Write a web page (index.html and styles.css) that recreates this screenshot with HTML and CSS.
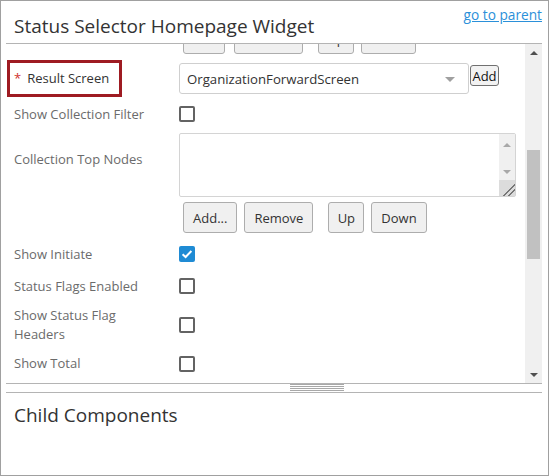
FILE: index.html
```html
<!DOCTYPE html>
<html>
<head>
<meta charset="utf-8">
<link rel="stylesheet" href="styles.css">
</head>
<body>
<div class="panel">
  <div class="header">
    <h1 class="title">Status Selector Homepage Widget</h1>
    <a class="parent-link" href="#">go to parent</a>
  </div>
  <div class="scroll-area">
    <div class="scroll-view">
      <div class="scroll-content">
        <div class="row row-btns row-btns-top">
          <div class="label"></div>
          <div class="control btn-group">
            <button class="btn btn-narrow">Add</button>
            <button class="btn">Remove</button>
            <button class="btn btn-up">Up</button>
            <button class="btn">Down</button>
          </div>
        </div>
        <div class="row row-result">
          <div class="label">
            <span class="highlight"><span class="req">*</span>Result Screen</span>
          </div>
          <div class="control select-wrap">
            <div class="select">
              <span class="select-text">OrganizationForwardScreen</span>
              <span class="select-arrow"></span>
            </div>
            <button class="btn-small">Add</button>
          </div>
        </div>
        <div class="row row-check row-filter">
          <div class="label">Show Collection Filter</div>
          <div class="control"><span class="checkbox"></span></div>
        </div>
        <div class="row row-nodes">
          <div class="label label-top">Collection Top Nodes</div>
          <div class="control">
            <div class="textarea">
              <div class="ta-bar">
                <span class="ta-arrow ta-up"></span>
                <span class="ta-arrow ta-down"></span>
                <span class="ta-grip"></span>
              </div>
            </div>
          </div>
        </div>
        <div class="row row-btns">
          <div class="label"></div>
          <div class="control btn-group">
            <button class="btn">Add...</button>
            <button class="btn">Remove</button>
            <button class="btn btn-up">Up</button>
            <button class="btn">Down</button>
          </div>
        </div>
        <div class="row row-check row-initiate">
          <div class="label">Show Initiate</div>
          <div class="control"><span class="checkbox checked"><svg viewBox="0 0 16 16" width="16" height="16"><path d="M3.6 8.2 L6.6 11 L12.4 5" fill="none" stroke="#fff" stroke-width="2"/></svg></span></div>
        </div>
        <div class="row row-check row-flags">
          <div class="label">Status Flags Enabled</div>
          <div class="control"><span class="checkbox"></span></div>
        </div>
        <div class="row row-check row-headers">
          <div class="label label-wrap">Show Status Flag Headers</div>
          <div class="control"><span class="checkbox"></span></div>
        </div>
        <div class="row row-check row-total">
          <div class="label">Show Total</div>
          <div class="control"><span class="checkbox"></span></div>
        </div>
      </div>
    </div>
    <div class="scrollbar">
      <div class="sb-btn"><span class="sb-arrow-up"></span></div>
      <div class="sb-track"><div class="sb-thumb"></div></div>
      <div class="sb-btn"><span class="sb-arrow-down"></span></div>
    </div>
  </div>
  <div class="splitter"><div class="grip"></div></div>
  <div class="child-section">
    <h2 class="child-title">Child Components</h2>
  </div>
</div>
</body>
</html>
```

FILE: styles.css
```css
* { box-sizing: border-box; }
html, body { margin: 0; padding: 0; background: #fff; }
body { font-family: "Open Sans", "Noto Sans", sans-serif; color: #333; }

.panel {
  width: 549px;
  height: 476px;
  border: 1px solid #a0a0a0;
  padding: 0 6px 0 5px;
  display: flex;
  flex-direction: column;
  overflow: hidden;
}

.header {
  height: 43px;
  border-bottom: 1px solid #b4b4b4;
  display: flex;
  justify-content: space-between;
  align-items: flex-start;
  flex: none;
}
.title {
  margin: 13px 0 0 8px;
  font-size: 19px;
  line-height: 24px;
  font-weight: normal;
  color: #333;
}
.parent-link {
  margin-top: 5px;
  font-size: 13.7px;
  line-height: 18px;
  color: #2b90d9;
  text-decoration: underline;
}

.scroll-area {
  height: 340px;
  flex: none;
  display: flex;
  border-bottom: 1px solid #b4b4b4;
}
.scroll-view {
  flex: 1;
  overflow: hidden;
}
.scroll-content {
  margin-top: -21px;
  padding-left: 8px;
  font-size: 13px;
}

.row {
  display: grid;
  grid-template-columns: 165px 1fr;
  align-items: center;
}
.label { color: #6b6b6b; line-height: 19px; }
.row-btns { height: 31px; }
.row-btns-top { margin-bottom: 6px; }
.row-result { height: 37px; }
.row-filter { height: 34px; }
.row-nodes { height: 64px; margin-top: 2px; align-items: start; }
.row-nodes + .row-btns { margin-top: 5px; }
.row-initiate { height: 32px; margin-top: 5px; }
.row-flags { height: 32px; }
.row-headers { height: 45px; }
.row-total { height: 33px; }
.label-top { padding-top: 17px; }
.label-wrap { width: 120px; }

.btn-group { display: flex; padding-left: 4px; height: 31px; }
.btn {
  height: 31px;
  margin: 0 7px 0 0;
  padding: 0 9px;
  border: 1px solid #adadad;
  border-radius: 3px;
  background: #f0f0f0;
  font-family: inherit;
  font-size: 13px;
  color: #333;
}
.btn-narrow { padding: 0 8px; width: 42px; margin-right: 9px; }
.btn-up { margin-left: 8px; padding: 0 8px; width: 36px; }

.highlight {
  display: inline-flex;
  align-items: center;
  width: 115px;
  height: 37px;
  margin-left: -7px;
  padding-left: 4px;
  border: 3px solid #9e1b22;
  color: #333;
}
.req { color: #d0312d; margin-right: 6px; }

.select-wrap { display: flex; align-items: center; }
.select {
  width: 290px;
  height: 31px;
  border: 1px solid #cfcfcf;
  border-radius: 3px;
  display: flex;
  align-items: center;
  justify-content: space-between;
  padding: 1px 13px 0 7px;
  font-size: 13.2px;
  color: #333;
}
.select-arrow {
  width: 0; height: 0;
  border-left: 5px solid transparent;
  border-right: 5px solid transparent;
  border-top: 5px solid #a0a0a0;
}
.btn-small {
  height: 21px;
  width: 29px;
  margin-left: 1px;
  margin-top: -6px;
  padding: 0;
  border: 1px solid #707070;
  border-radius: 3px;
  background: #f2f2f2;
  font-family: inherit;
  font-size: 13px;
  color: #111;
}

.checkbox {
  display: block;
  width: 16px;
  height: 16px;
  border: 2px solid #636363;
  border-radius: 2px;
  background: #fff;
}
.checkbox.checked {
  border: none;
  background: #1f8bd4;
}
.checkbox svg { display: block; }

.textarea {
  width: 337px;
  height: 64px;
  border: 1px solid #d4d4d4;
  border-radius: 2px;
  display: flex;
  justify-content: flex-end;
}
.ta-bar {
  width: 16px;
  background: #f0f0f0;
  position: relative;
}
.ta-arrow {
  position: absolute;
  left: 4px;
  width: 0; height: 0;
  border-left: 4px solid transparent;
  border-right: 4px solid transparent;
}
.ta-up { top: 9px; border-bottom: 4px solid #a8a8a8; }
.ta-down { top: 36px; border-top: 4px solid #a8a8a8; }
.ta-grip {
  position: absolute;
  left: 0; right: 0; bottom: 0;
  height: 16px;
  background:
    linear-gradient(135deg, transparent 60%, #777 60%, #777 66%, transparent 66%, transparent 78%, #777 78%, #777 84%, transparent 84%),
    #dcdcdc;
}

.scrollbar {
  width: 17px;
  background: #f0f0f0;
  display: flex;
  flex-direction: column;
  flex: none;
}
.sb-btn {
  height: 17px;
  display: flex;
  align-items: center;
  justify-content: center;
  flex: none;
}
.sb-arrow-up, .sb-arrow-down {
  width: 0; height: 0;
  border-left: 4px solid transparent;
  border-right: 4px solid transparent;
}
.sb-arrow-up { border-bottom: 4px solid #505050; }
.sb-arrow-down { border-top: 4px solid #505050; }
.sb-track { flex: 1; padding: 89px 2px 0 2px; }
.sb-thumb { height: 109px; background: #c1c1c1; }

.splitter {
  height: 9px;
  border-bottom: 1px solid #b4b4b4;
  flex: none;
  padding-top: 0;
}
.grip {
  width: 54px;
  height: 7px;
  margin-left: 284px;
  background: repeating-linear-gradient(to bottom, #a8a8a8 0, #a8a8a8 1px, transparent 1px, transparent 2px);
}

.child-section { padding: 10px 0 0 8px; }
.child-title {
  margin: 0;
  font-size: 19px;
  line-height: 24px;
  font-weight: normal;
  color: #333;
}
```
